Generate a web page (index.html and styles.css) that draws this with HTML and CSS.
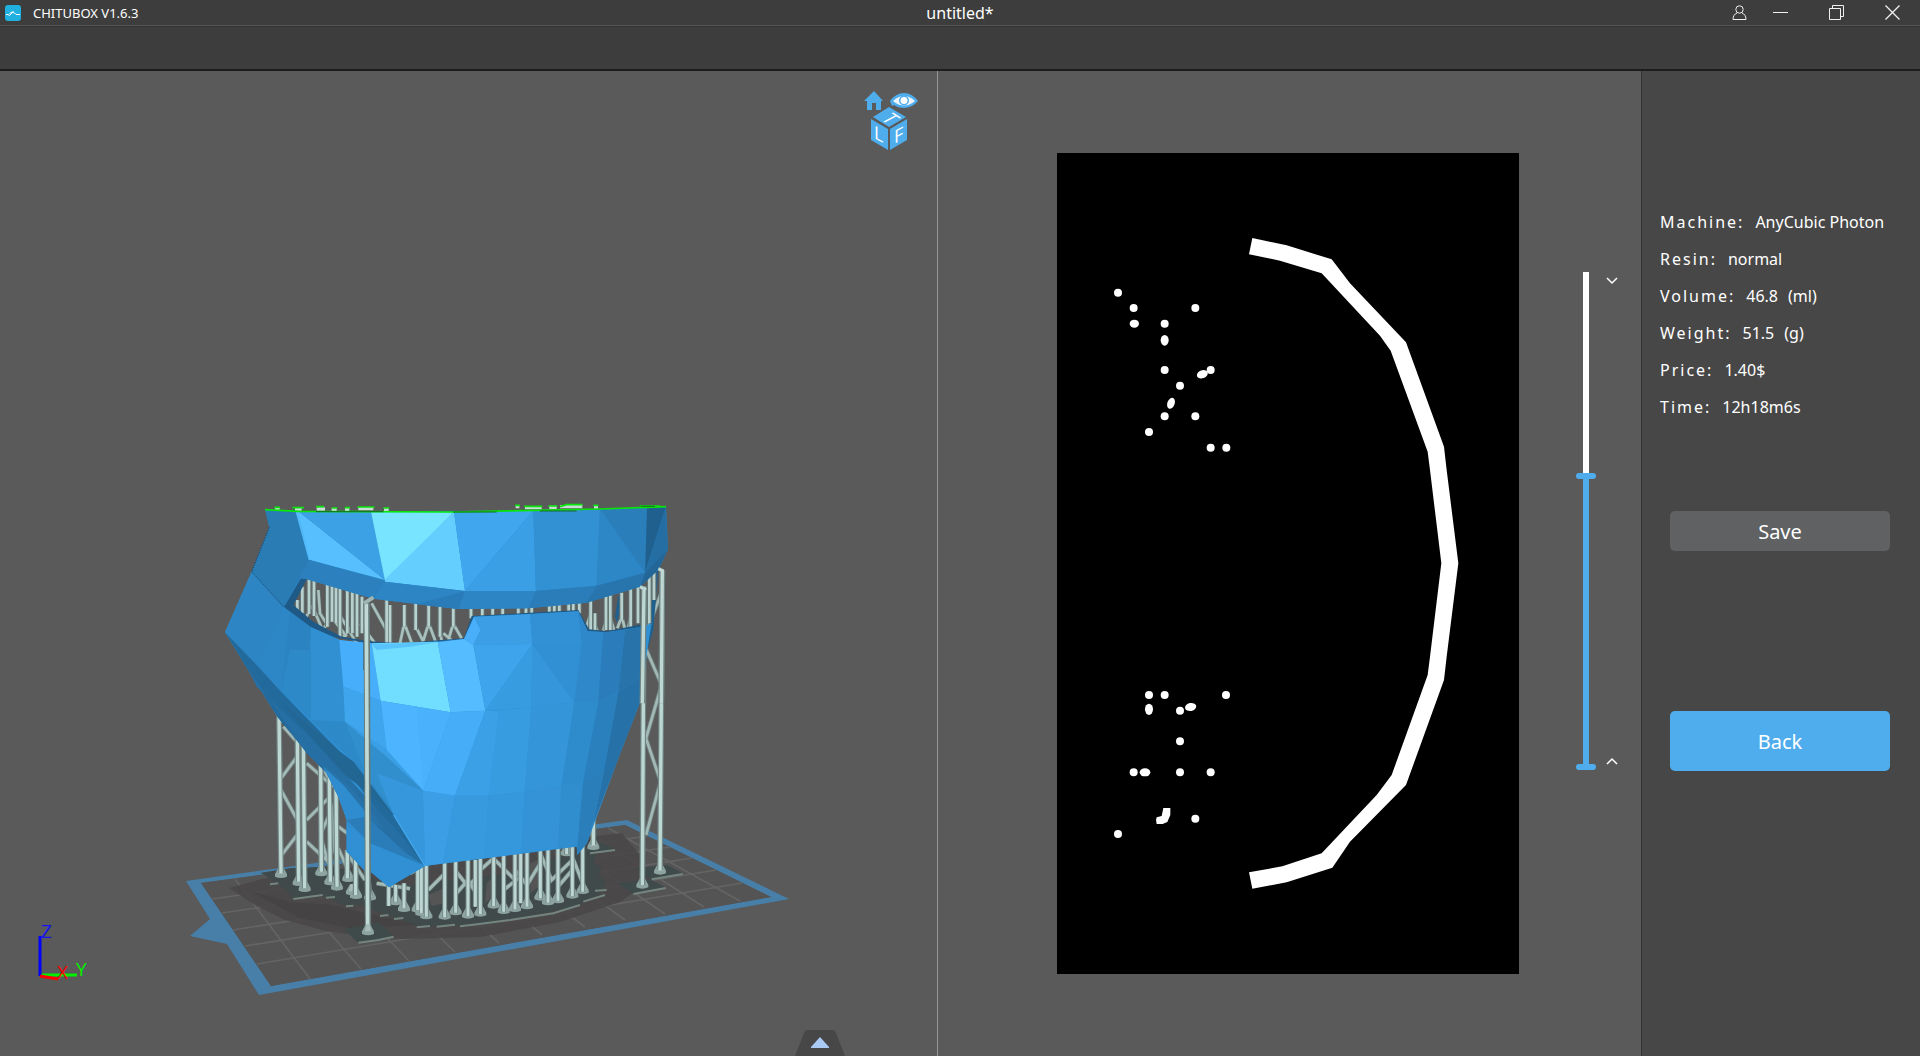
FILE: index.html
```html
<!DOCTYPE html>
<html lang="en">
<head>
<meta charset="utf-8">
<title>CHITUBOX V1.6.3</title>
<link rel="stylesheet" href="styles.css">
</head>
<body>
<header class="titlebar">
  <div class="brand">
    <svg class="brand-logo" width="16" height="16" viewBox="0 0 16 16" aria-hidden="true"><rect width="16" height="16" rx="3" fill="#1fb0e0"/><path d="M1 9.5h2l1.500 1 3-3 2 .5 1.500 1.500h4M4.500 8.500l2.500-1.500 2 0" fill="none" stroke="#fff"/></svg>
    <span>CHITUBOX V1.6.3</span>
  </div>
  <h1 class="doc-name">untitled*</h1>
  <div class="window-controls">
    <button class="win-btn" aria-label="Account"><svg width="16" height="16" viewBox="0 0 16 16"><circle cx="7.500" cy="4.500" r="3.700"/><path d="M5 8C2.500 9 1 11 1 14.500h13C14 11 12.500 9 10 8"/></svg></button>
    <button class="win-btn" aria-label="Minimize"><svg width="16" height="16" viewBox="0 0 16 16"><path d="M0 7.500h15"/></svg></button>
    <button class="win-btn wide" aria-label="Restore"><svg width="16" height="16" viewBox="0 0 16 16"><path d="M.5 3.500h11v11H.500zM3.500 3.500v-3h11v11h-3"/></svg></button>
    <button class="win-btn wide" aria-label="Close"><svg width="16" height="16" viewBox="0 0 16 16"><path d="M.5.5l14 14M14.500.5l-14 14" stroke-width="1.300"/></svg></button>
  </div>
</header>
<div class="toolbar"></div>

<main class="workspace">
  <section class="model-pane" aria-label="Model preview">
    <svg class="scene" viewBox="0 71 937 985" aria-hidden="true">
      <defs>
        <path id="back-posts" d="M207 675L213 1150M262 740L266 1175M280 750L284 1195M332 820L334 1145M358 860L361 1175M378 890L381 1190M412 1080V1165M437 1100V1215M470 1140L480 1220M1357 240L1350 1140M1302 290L1297 1185M1150 990V1065"/>
        <path id="back-braces" d="M213 865L265 795M213 900L270 1005M215 1095L265 1030M290 820L370 890M290 990L360 920M290 1055L360 1120M220 710L260 755M335 1025L365 960L375 1090M340 830L360 880M335 1050L355 1120M385 1010L412 1030M385 1075L425 1165M412 1090L465 1170M1357 300L1308 430M1305 470L1355 585L1308 745L1352 875L1308 1035"/>
        <path id="foot-posts" d="M536 1180V1248M557 1185V1235M582 1180V1255M623 1100V1260M634 1100V1270M649 1120V1280M704 1110V1282M737 1110V1268M774 1110V1278M796 1110V1250M811 1100V1272M851 1090V1248M881 1095V1265M915 1090V1258M932 1090V1240M951 1085V1250M991 1080V1225M1014 1070V1238M1044 1070V1232M1070 1070V1092M1087 1065V1218M1118 1050V1205"/>
        <path id="foot-braces" d="M500 1180L600 1196M600 1150L636 1130M655 1200L705 1150M735 1140L774 1190L811 1150M735 1215L774 1170L811 1230M800 1150L850 1105L915 1170M881 1200L932 1160M915 1140L951 1185L991 1120M991 1090L1025 1170L1087 1110M1044 1190L1087 1140M1087 1100L1118 1180"/>
        <path id="eye-posts" d="M262 330V360M277 290V370M297 260V372M312 265V378M352 275V410M366 280V395M378 285V400M390 295V440M412 300V430M427 305V430M441 310V440M456 320V430M530 330V460M540 345V460M583 345V410M617 335V420M656 345V410M690 345V440M730 352V410M783 350V385M817 350V380M848 350V380M878 350V380M925 350V380M948 350V380M965 350V380M1018 345V380M1033 340V378M1048 340V378M1076 335V370M1090 335V370M1108 335V370M1142 330V420M1155 370V425M1188 315V420M1201 315V420M1235 308V390M1262 295V415M1284 290V400M1318 260V400M1332 240V330"/>
        <path id="eye-braces" d="M305 345L285 390M308 350L340 425M325 300L330 370L355 410M365 380L335 425M368 385L410 440M392 380L440 460M440 390L400 440M450 400L495 460M485 340L540 440M583 400L570 460M585 405L605 458M620 415L640 455M656 400L640 452M658 405L677 455M688 400L695 455M700 430L730 455M730 400L715 450M732 405L755 445M1142 370L1128 415M1145 380L1162 422M1190 385L1180 422M1200 380L1212 420M1235 380L1222 415M1237 385L1245 418M1262 380L1255 412M1290 290L1308 300"/>
        <g id="foot"><path d="M-18 10L-18 2L-7-18H7L18 2V10Q0 18-18 10Z" fill="#8da3a0"/><path d="M-5-20H5L9 2H-9Z" fill="#a7bbb8"/></g>
      </defs>

      <!-- build plate -->
      <path fill="#477fa8" fill-rule="evenodd" d="M186 881L627 820L789 899L259 995L227 944L190 936L210 919ZM201 883L271 986L771 897L625 825Z"/>
      <path fill="#545454" d="M201 883L271 986L771 897L625 825Z"/>
      <path fill="none" stroke="#646464" stroke-width="1.700" d="M235 879L310 979M278 873L361 969M320 867L409 961M361 861L455 952M401 856L499 943M440 850L542 935M478 845L585 927M515 840L625 920M550 835L665 914M585 831L704 907M608 828L740 901M212 899L648 836M222 913L670 847M233 930L692 858M245 946L716 870M257 964L742 883"/>
      <path fill="#4a4848" fill-opacity=".92" d="M229 888L262 879L330 870L540 842L622 833L640 855L652 880L620 902L560 922L480 937L400 939L330 932L285 920L255 905Z"/>
      <path fill="#454343" d="M252 892L290 902L330 905L420 925L350 928L300 918Z"/>

      <g transform="translate(210 490) scale(.33333)">
        <!-- support rafts -->
        <path fill="#404a4a" d="M153 1148L240 1135L340 1130L420 1140L520 1180L600 1185L900 1150L1120 1070L1165 1040L1160 1090L1150 1120L1175 1130L1165 1160L1185 1170L1180 1200L1150 1225L1090 1250L930 1285L780 1305L640 1312L560 1285L500 1265L460 1245L400 1245L350 1220L250 1225L215 1190Z"/>
        <path fill="#3f4a4a" d="M402 1318L505 1297L551 1338L445 1360ZM1222 1180L1320 1168L1367 1192L1270 1212ZM1276 1135L1372 1125L1418 1150L1325 1168ZM1130 1068L1180 1058L1215 1078L1140 1090Z"/>
        <path fill="none" stroke="#74857f" stroke-width="6" d="M180 1183L205 1180M250 1227L338 1215M348 1223L375 1221M408 1249L430 1247M510 1278L535 1275M552 1287L580 1284M620 1312L660 1308M680 1310L735 1304M750 1309L790 1304L900 1290L1030 1270L1110 1245M1120 1235L1185 1215M1155 1202L1190 1200M445 1358L505 1350L551 1340M1270 1212L1367 1194M1325 1168L1418 1152M1140 1090L1215 1080"/>
        <path fill="#555" d="M655 1215L700 1195V1240L665 1248ZM830 1180L850 1160V1220L825 1240ZM960 1120L985 1110V1190L962 1210Z"/>
        <use href="#back-braces" fill="none" stroke="#6f8482" stroke-width="13"/>
        <use href="#back-braces" fill="none" stroke="#a3b9b6" stroke-width="8"/>
        <g><use href="#foot" x="213" y="1150"/><use href="#foot" x="266" y="1174"/><use href="#foot" x="284" y="1192"/><use href="#foot" x="334" y="1145"/><use href="#foot" x="361" y="1172"/><use href="#foot" x="381" y="1188"/><use href="#foot" x="415" y="1162"/><use href="#foot" x="426" y="1202"/><use href="#foot" x="438" y="1213"/><use href="#foot" x="480" y="1218"/><use href="#foot" x="1297" y="1182"/><use href="#foot" x="1350" y="1140"/><use href="#foot" x="1150" y="1066"/><use href="#foot" x="1070" y="1085"/></g>
        <use href="#back-posts" fill="none" stroke="#718684" stroke-width="17"/>
        <use href="#back-posts" fill="none" stroke="#bdd7d3" stroke-width="10"/>
        <use href="#foot-braces" fill="none" stroke="#6f8482" stroke-width="13"/>
        <use href="#foot-braces" fill="none" stroke="#a3bab7" stroke-width="9"/>
        <g><use href="#foot" x="557" y="1232"/><use href="#foot" x="582" y="1252"/><use href="#foot" x="623" y="1254"/><use href="#foot" x="634" y="1264"/><use href="#foot" x="649" y="1274"/><use href="#foot" x="704" y="1275"/><use href="#foot" x="737" y="1262"/><use href="#foot" x="774" y="1272"/><use href="#foot" x="811" y="1266"/><use href="#foot" x="851" y="1242"/><use href="#foot" x="881" y="1258"/><use href="#foot" x="915" y="1252"/><use href="#foot" x="951" y="1244"/><use href="#foot" x="991" y="1218"/><use href="#foot" x="1014" y="1232"/><use href="#foot" x="1044" y="1226"/><use href="#foot" x="1087" y="1212"/><use href="#foot" x="1118" y="1198"/></g>
        <use href="#foot-posts" fill="none" stroke="#6f8583" stroke-width="15"/>
        <use href="#foot-posts" fill="none" stroke="#bdd6d3" stroke-width="9"/>

        <!-- supports seen through the eye slots -->
        <path fill="#20608e" d="M1215 380L1225 315L1235 330L1222 400ZM1345 240L1330 420L1312 480L1318 400L1335 250Z"/>
        <use href="#eye-braces" fill="none" stroke="#5f7371" stroke-width="12"/>
        <use href="#eye-braces" fill="none" stroke="#aac0bd" stroke-width="8"/>
        <use href="#eye-posts" fill="none" stroke="#627674" stroke-width="14"/>
        <use href="#eye-posts" fill="none" stroke="#b9d1ce" stroke-width="8"/>

        <!-- mask, forehead part -->
        <path fill="#2d84c2" d="M165 58L265 64L970 62L1368 50L1374 178L1345 240L1290 290L1130 338L955 355L745 357L490 326L285 266L222 352L125 245L178 112Z"/>
        <path fill="#2a7cb5" d="M165 58L258 62L298 210L222 352L125 245L178 112Z"/>
        <path fill="#52b9f9" d="M256 62L267 64L303 210L296 210Z"/>
        <path fill="#58bfff" d="M265 64L525 270L300 210Z"/>
        <path fill="#3da1e5" d="M265 64L483 66L525 270Z"/>
        <path fill="#78e4ff" d="M483 66L732 66L525 272Z"/>
        <path fill="#64cfff" d="M732 66L765 303L525 275V268Z"/>
        <path fill="#40a7ef" d="M732 66L970 62L765 303Z"/>
        <path fill="#3b9fe5" d="M970 62L978 303H765Z"/>
        <path fill="#3494d8" d="M970 62H1170L978 303Z"/>
        <path fill="#3191d3" d="M1170 60L1160 287L978 303L970 62Z"/>
        <path fill="#2a7fbb" d="M1170 58L1311 54L1305 248Z"/>
        <path fill="#2d87c7" d="M1170 58L1305 248L1160 287Z"/>
        <path fill="#20608f" d="M1311 54L1368 50L1305 248Z"/>
        <path fill="#256ea3" d="M1368 50L1374 178L1305 248Z"/>
        <path fill="#2b80bd" d="M298 210L525 275L490 326L285 266L222 352Z"/>
        <path fill="#2d85c4" d="M525 275L765 303H978L955 355L745 357L490 326Z"/>
        <path fill="#2a7cb8" d="M765 303L745 357L620 343Z"/>
        <path fill="#2a7db9" d="M978 303L1160 287L1130 338L955 355Z"/>
        <path fill="#2875ae" d="M1160 287L1305 248L1290 290L1130 338Z"/>
        <path fill="#226797" d="M1305 248L1374 178L1345 240L1290 290Z"/>

        <!-- mask, face part -->
        <path fill="#1f5a87" d="M222 352L272 266L290 268L250 345L310 395L395 440L480 454L570 460L762 445L785 378L1105 360L1137 418L1190 424L1300 402V420L1100 480L600 480L300 430Z"/>
        <path fill="#3190d2" d="M125 245L222 352L300 410L390 450L480 461L600 462L762 447L792 380L1105 364L1133 424L1190 427L1298 410L1325 400L1312 480L1295 625L1225 805L1131 1060L1102 1095L1100 1070L645 1128L537 1192L410 1085V990L385 920L340 830L203 682L105 525L45 427Z"/>
        <path fill="#2d85c4" d="M125 245L222 352L140 525L45 427Z"/>
        <path fill="#2c83c1" d="M222 352L303 412V480L213 605L140 525Z"/>
        <path fill="#2d86c5" d="M222 352L240 368L213 605L140 525Z"/>
        <path fill="#3190d2" d="M303 412L390 450L400 590L405 695L300 690V500Z"/>
        <path fill="#2e89c9" d="M303 480V690L213 605L240 480Z"/>
        <path fill="#3191d4" d="M213 605L300 690L430 815L390 785Z"/>
        <path fill="#2e89c9" d="M300 690L405 695L470 790L520 850L551 975L430 815Z"/>
        <path fill="#47aefb" d="M388 450L485 460L512 632L400 590Z"/>
        <path fill="#3fa5ed" d="M400 590L512 632L530 780L405 695Z"/>
        <path fill="#3b9fe5" d="M405 695L530 780L640 902L530 815Z"/>
        <path fill="#318fce" d="M405 695L530 800L640 902L560 975L470 860Z"/>
        <path fill="#3697dc" d="M500 850L640 902L645 1128L551 975Z"/>
        <path fill="#72deff" d="M485 460L683 455L722 667L512 632Z"/>
        <path fill="#58c4fb" d="M485 462L683 457L600 470L500 480Z"/>
        <path fill="#55bcff" d="M683 457L762 447L790 465L826 662L722 667Z"/>
        <path fill="#4db4ff" d="M512 632L722 667L640 902L530 780Z"/>
        <path fill="#4ab1fc" d="M620 652L722 667L640 902Z"/>
        <path fill="#46adf8" d="M722 667L826 662L735 917L640 902Z"/>
        <path fill="#49affb" d="M762 447L792 380L812 420L790 465Z"/>
        <path fill="#3c9fe6" d="M792 380L960 373L967 462L790 465L812 420Z"/>
        <path fill="#3ea4ec" d="M790 465L967 462L826 662Z"/>
        <path fill="#389ce1" d="M967 462L964 652L826 662Z"/>
        <path fill="#3291d4" d="M960 373L1105 364L1115 460L967 462Z"/>
        <path fill="#3596db" d="M967 462L1093 637L964 652Z"/>
        <path fill="#3190d3" d="M967 462L1115 460L1093 637Z"/>
        <path fill="#2e88c9" d="M1105 364L1133 424L1190 427L1165 635L1093 637L1115 460Z"/>
        <path fill="#2a7dba" d="M1180 427L1245 420L1225 605L1165 635Z"/>
        <path fill="#2773aa" d="M1245 420L1300 409L1295 560L1225 605Z"/>
        <path fill="#3ca0e7" d="M826 662H870L836 917H735Z"/>
        <path fill="#389ce1" d="M866 660L964 652L944 905L836 917Z"/>
        <path fill="#3495d9" d="M964 652L1093 637L1054 888L944 905Z"/>
        <path fill="#2f8ccc" d="M1093 637L1165 635L1119 875L1054 888Z"/>
        <path fill="#2a80bd" d="M1165 635L1225 605L1182 842L1119 875Z"/>
        <path fill="#2672a8" d="M1225 605L1295 560V625L1225 805L1150 1000L1182 842Z"/>
        <path fill="#41a8f1" d="M640 902L735 917L645 1050Z"/>
        <path fill="#3c9fe6" d="M640 902L735 917L700 1120L645 1128Z"/>
        <path fill="#379ade" d="M735 917H836L825 1105L700 1120Z"/>
        <path fill="#3698dc" d="M836 917L944 905L935 1090L825 1105Z"/>
        <path fill="#3393d6" d="M944 905L1054 888L1045 1075L935 1090Z"/>
        <path fill="#308dce" d="M1054 888L1119 875L1110 1065L1045 1075Z"/>
        <path fill="#2a7eba" d="M1119 875L1182 842L1150 1000L1131 1060L1100 1095Z"/>
        <!-- mask, jaw and underside -->
        <path fill="#236a9c" d="M45 427L140 525L213 605L390 785L430 815L551 975L645 1128L540 1010L440 880L300 800L203 682L105 525Z"/>
        <path fill="#256fa4" d="M110 530L140 590L300 740L430 880L560 1020L645 1128L540 1060L400 900L290 790Z"/>
        <path fill="#226694" d="M215 640L390 785L430 815L551 975L500 930L400 850Z"/>
        <path fill="#2773aa" d="M203 682L300 790L420 890L520 1010L440 1000L385 920L340 830Z"/>
        <path fill="#2f8dcf" d="M340 830L400 885L470 970L470 1150L410 1085V990L385 920Z"/>
        <path fill="#2a7db9" d="M410 990L470 980L600 1100L645 1128L480 1060Z"/>
        <path fill="#3090d3" d="M410 1000L480 1060L645 1128L537 1192L410 1085Z"/>
        <path fill="none" stroke="#44a9ef" stroke-width="4" d="M551 975L645 1128"/>
        <path fill="none" stroke="#184566" stroke-width="3" stroke-dasharray="4 4" d="M178 112L125 245L222 352"/>

        <!-- current layer outline -->
        <path fill="none" stroke="#c9dcd8" stroke-width="10" d="M195 58H209M255 57H275M320 57H345M365 58H380M405 58H418M445 56H490M522 58H536M917 50H928M945 53H995M1018 52H1040M1050 50H1117M1152 52H1164"/>
        <path fill="none" stroke="#09e509" stroke-width="5" d="M165 59L265 64L730 66L970 61L1170 57L1368 50M193 52H210M247 53H282M318 50H342M365 54H382M404 53H420M442 51H494M520 54H538M915 46H930M942 49H997M1015 48H1042M1050 50L1070 44H1118M1150 46H1165M1290 48H1350"/>
        <path fill="none" stroke="#146e20" stroke-width="3" d="M318 65H520M730 66H860M990 63H1100M1292 49H1335"/>

        <!-- front post -->
        <path fill="#3c494b" fill-opacity=".6" d="M459 450H465V540H459Z"/>
        <path fill="none" stroke="#667b79" stroke-width="19" d="M470 338L474 1310"/>
        <path fill="none" stroke="#c2dad6" stroke-width="11" d="M469 342L473 1310"/>
        <path fill="none" stroke="#9fb5b2" stroke-width="12" d="M462 340L490 322"/>
        <use href="#foot" x="474" y="1322"/>
        <path fill="none" stroke="#6f8583" stroke-width="17" d="M1302 290L1297 640M1357 240L1354 640"/>
        <path fill="none" stroke="#bed7d3" stroke-width="10" d="M1302 290L1297 640M1357 240L1354 640M1290 290L1308 300M1345 236L1360 243"/>
      </g>

      <!-- axis marker -->
      <g fill="none" stroke-width="3"><path stroke="#00f000" d="M41 975H77"/><path stroke="#00f" d="M40 976V936"/><path stroke="#f00" d="M40 976L58 979"/></g>
      <text class="axis axis-z" x="41" y="938">Z</text>
      <text class="axis axis-x" x="57" y="979">X</text>
      <text class="axis axis-y" x="76" y="976">Y</text>
    </svg>

    <button class="view-cube" aria-label="View orientation">
      <svg width="56" height="64" viewBox="0 0 56 64">
        <g fill="#4fadec">
          <path d="M0 11L10 1L19 11H17V20H12V13H8V20H3V11Z"/>
          <path d="M26 11Q32 3 40 3T54 11Q48 18 40 18Q34 18 30 15L28 16Z"/>
          <path d="M9 27L25 17L42 27L25 37ZM7 29L24 39V60L7 50ZM26 39L43 29V50L26 60Z"/>
        </g>
        <path d="M29 11Q40 1 51 11Q40 20 29 11Z" fill="#eef6fc"/><circle cx="40" cy="10.500" r="5" fill="#4fadec"/><circle cx="40" cy="10.500" r="3.500" fill="#fff"/>
        <text class="face" transform="translate(10 48) skewY(28)">L</text>
        <text class="face" transform="translate(30 54) skewY(-28)">F</text>
        <text class="face" transform="translate(20 27) rotate(34) skewX(-28) translate(0 4)">T</text>
      </svg>
    </button>
    <button class="drawer-tab" aria-label="Show file list"><svg width="50" height="26" viewBox="0 0 50 26"><path d="M0 26L9 3Q10 0 13 0H37Q40 0 41 3L50 26Z" fill="#474747"/><path d="M16 17L25 7L34 17V18H16Z" fill="#abcaf3"/></svg></button>
  </section>

  <section class="slice-pane" aria-label="Slice preview">
    <svg class="slice" viewBox="1057 153 462 821" role="img" aria-label="Layer image">
      <path d="M1057 153H1519V974H1057Z"/>
      <g transform="translate(1080 220) scale(.33333)" fill="#fff">
        <path d="M517 54L620 76L755 118L810 190L978 367L1092 680L1100 750L1135 1030L1100 1310L1092 1380L978 1695L810 1865L757 1943L620 1987L517 2006L507 1957L607 1939L725 1900L890 1725L935 1665L1043 1365L1050 1310L1084 1030L1050 750L1043 695L932 392L900 347L725 160L600 122L507 103Z"/>
        <circle cx="114" cy="218" r="12"/><circle cx="161" cy="264" r="12"/><circle cx="346" cy="264" r="12"/><ellipse cx="163" cy="311" rx="14" ry="12"/><circle cx="254" cy="311" r="12"/><ellipse cx="254" cy="361" rx="12" ry="16"/><circle cx="254" cy="450" r="12"/><circle cx="392" cy="450" r="12"/><ellipse cx="367" cy="463" rx="17" ry="12" transform="rotate(-20 367 463)"/><circle cx="300" cy="497" r="12"/><ellipse cx="273" cy="550" rx="11" ry="17" transform="rotate(20 273 550)"/><circle cx="254" cy="589" r="12"/><circle cx="346" cy="589" r="12"/><circle cx="207" cy="636" r="12"/><circle cx="392" cy="683" r="12"/><circle cx="439" cy="683" r="12"/>
        <circle cx="207" cy="1425" r="12"/><circle cx="254" cy="1425" r="12"/><circle cx="438" cy="1425" r="12"/><ellipse cx="207" cy="1468" rx="12" ry="17"/><circle cx="300" cy="1472" r="12"/><ellipse cx="332" cy="1461" rx="17" ry="12" transform="rotate(-12 332 1461)"/><circle cx="300" cy="1564" r="12"/><circle cx="161" cy="1657" r="12"/><ellipse cx="195" cy="1657" rx="16" ry="12"/><circle cx="300" cy="1657" r="12"/><circle cx="392" cy="1657" r="12"/><path d="M250 1764H271V1785L262 1806L248 1812H230Q226 1800 230 1792L245 1788Z"/><circle cx="346" cy="1796" r="12"/><circle cx="114" cy="1842" r="12"/>
      </g>
    </svg>
    <div class="layer-control">
      <div class="layer-slider">
        <input class="range range-top" type="range" min="0" max="1000" value="591" aria-label="Top layer">
        <input class="range range-bottom" type="range" min="0" max="1000" value="0" aria-label="Bottom layer">
      </div>
      <div class="layer-steps">
        <button class="step" aria-label="Layer down"><svg width="12" height="8" viewBox="0 0 12 8"><path d="M1 1L6 6L11 1"/></svg></button>
        <button class="step" aria-label="Layer up"><svg width="12" height="8" viewBox="0 0 12 8"><path d="M1 7L6 2L11 7"/></svg></button>
      </div>
    </div>
  </section>

  <aside class="panel">
    <dl class="stats">
      <div><dt>Machine:</dt><dd>AnyCubic Photon</dd></div>
      <div><dt>Resin:</dt><dd>normal</dd></div>
      <div><dt>Volume:</dt><dd>46.8<span class="unit">(ml)</span></dd></div>
      <div><dt>Weight:</dt><dd>51.5<span class="unit">(g)</span></dd></div>
      <div><dt>Price:</dt><dd>1.40$</dd></div>
      <div><dt>Time:</dt><dd>12h18m6s</dd></div>
    </dl>
    <button class="btn btn-save">Save</button>
    <button class="btn btn-back">Back</button>
  </aside>
</main>
</body>
</html>
```
FILE: styles.css
```css
* { box-sizing: border-box; }

body {
  margin: 0;
  min-height: 100vh;
  display: flex;
  flex-direction: column;
  background: #3d3d3d;
  color: #fff;
  font-family: "Noto Sans", "Open Sans", sans-serif;
  overflow: hidden;
}

button {
  padding: 0;
  border: 0;
  background: none;
  color: inherit;
  font: inherit;
}

svg { display: block; }

.titlebar {
  display: grid;
  grid-template-columns: 1fr auto 1fr;
  align-items: center;
  height: 26px;
  border-bottom: 1px solid #565656;
}

.brand {
  display: flex;
  align-items: center;
  gap: 12px;
  padding-left: 5px;
  font-size: 13px;
}

.doc-name {
  margin: 0;
  font-size: 16px;
  line-height: 24px;
  font-weight: 400;
}

.window-controls {
  display: flex;
  justify-content: flex-end;
  gap: 25px;
  padding-right: 19px;
}

.win-btn { width: 16px; height: 16px; }
.win-btn.wide { margin-left: 15px; }

.win-btn svg {
  fill: none;
  stroke: #f0f0f0;
}

.toolbar {
  height: 45px;
  border-top: 1px solid #333;
  border-bottom: 2px solid #1e1c1e;
}

.workspace {
  flex: 1;
  display: flex;
  min-height: 0;
}

.model-pane {
  position: relative;
  flex: 937 1 0;
  min-width: 0;
  border-right: 1px solid #969696;
  background: #5a5a5a;
  overflow: hidden;
}

.scene {
  position: absolute;
  width: 100%;
  height: 100%;
}

.axis {
  font-family: "Open Sans", sans-serif;
  font-size: 19px;
}
.axis-x { fill: #f00; }
.axis-y { fill: #00f000; }
.axis-z { fill: #1414f0; }

.view-cube {
  position: absolute;
  top: 19px;
  right: 17px;
}

.face {
  fill: #fff;
  font-family: "Open Sans", sans-serif;
  font-size: 18px;
}

.drawer-tab {
  position: absolute;
  right: 92px;
  bottom: 0;
}

.slice-pane {
  flex: 700 1 0;
  min-width: 0;
  display: grid;
  grid-template-columns: 1fr auto 1fr;
  align-items: center;
  padding-right: 3px;
  background: #5a5a5a;
}

.slice {
  grid-column: 2;
  width: 462px;
  height: auto;
}

.layer-control {
  align-self: start;
  display: flex;
  justify-content: flex-end;
  gap: 10px;
  padding: 201px 20px 0 0;
}

.layer-slider {
  display: grid;
  height: 498px;
}

.range {
  grid-area: 1 / 1;
  width: 20px;
  height: 100%;
  margin: 0;
  appearance: none;
  writing-mode: vertical-lr;
  direction: rtl;
  background: none;
}

.range-top {
  background: linear-gradient(#fff 204px, #4fadee 204px) center / 6px 100% no-repeat;
}

.range-bottom { pointer-events: none; }

.range::-webkit-slider-thumb {
  appearance: none;
  width: 20px;
  height: 6px;
  border-radius: 3px;
  background: #4fadee;
  pointer-events: auto;
}

.layer-steps {
  display: flex;
  flex-direction: column;
  justify-content: space-between;
  padding: 5px 0;
}

.step svg {
  fill: none;
  stroke: #fff;
  stroke-width: 1.5;
}

.panel {
  flex: none;
  width: 279px;
  padding: 133px 30px 0 18px;
  border-left: 1px solid #333;
  background: #474747;
}

.stats {
  margin: 0 -12px 85px 0;
  font-size: 16px;
  line-height: 37px;
  white-space: nowrap;
}

.stats div { display: flex; gap: 11px; }
.stats dt { letter-spacing: 2px; }
.stats dd { margin: 0; }
.unit { margin-left: 10px; }

.btn {
  display: block;
  width: 220px;
  margin-left: 10px;
  border-radius: 5px;
  font-size: 20px;
}

.btn-save {
  height: 40px;
  margin-bottom: 160px;
  background: #606163;
}

.btn-back {
  height: 60px;
  background: #4fadee;
}
```
